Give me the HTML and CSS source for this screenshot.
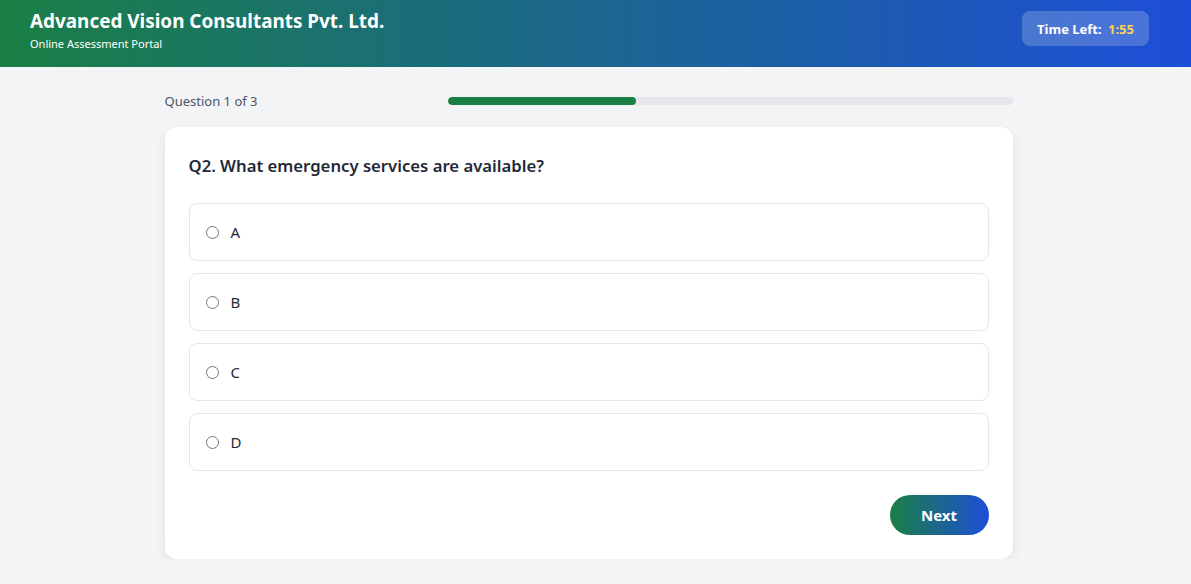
FILE: index.html
```html
<!DOCTYPE html>
<html lang="en">
<head>
<meta charset="utf-8">
<title>Online Assessment Portal</title>
<link rel="stylesheet" href="styles.css">
</head>
<body>
<header class="topbar">
  <div class="brand">
    <h1 class="brand-title">Advanced Vision Consultants Pvt. Ltd.</h1>
    <div class="brand-sub">Online Assessment Portal</div>
  </div>
  <div class="timer">Time Left: <span class="timer-value">1:55</span></div>
</header>
<main class="main">
  <div class="container">
    <div class="progress-row">
      <span class="progress-label">Question 1 of 3</span>
      <div class="progress-track"><div class="progress-fill" style="width:33.33%"></div></div>
    </div>
    <section class="card">
      <h2 class="question">Q2. What emergency services are available?</h2>
      <div class="options">
        <label class="option"><input type="radio" name="q" class="radio"><span>A</span></label>
        <label class="option"><input type="radio" name="q" class="radio"><span>B</span></label>
        <label class="option"><input type="radio" name="q" class="radio"><span>C</span></label>
        <label class="option"><input type="radio" name="q" class="radio"><span>D</span></label>
      </div>
      <div class="actions">
        <button class="next-btn">Next</button>
      </div>
    </section>
  </div>
</main>
</body>
</html>
```

FILE: styles.css
```css
* { box-sizing: border-box; }
html, body { margin: 0; padding: 0; }
body {
  font-family: "Noto Sans", "Open Sans", Arial, sans-serif;
  background: #f3f4f6;
  color: #1f2937;
}
.topbar {
  height: 67px;
  background: linear-gradient(90deg, #1a7f45 0%, #1d4ed8 100%);
  display: flex;
  justify-content: space-between;
  align-items: flex-start;
  padding: 8px 42px 0 30px;
  color: #fff;
}
.brand-title {
  margin: 0;
  font-size: 18.9px;
  line-height: 26px;
  font-weight: 700;
}
.brand-sub {
  font-size: 11px;
  line-height: 18px;
  margin-top: 1px;
}
.timer {
  margin-top: 3px;
  height: 35px;
  padding: 0 15px;
  display: flex;
  align-items: center;
  background: rgba(255,255,255,0.2);
  border-radius: 8px;
  font-size: 13px;
  font-weight: 700;
  white-space: pre;
}
.timer-value { color: #fcd34d; margin-left: 3px; }
.main { padding: 24px 14px 0 0; }
.container { width: 848px; margin: 0 auto; }
.progress-row {
  display: flex;
  align-items: center;
  justify-content: space-between;
  height: 20px;
}
.progress-label { font-size: 13px; color: #4b5563; }
.progress-track {
  width: 565px;
  height: 8px;
  background: #e5e7eb;
  border-radius: 4px;
  overflow: hidden;
}
.progress-fill { height: 100%; background: #1a7f45; border-radius: 4px; }
.card {
  margin-top: 16px;
  background: #fff;
  border-radius: 12px;
  box-shadow: 0 4px 12px rgba(0,0,0,0.08);
  padding: 24px;
}
.question {
  margin: 0 0 22px;
  font-size: 16.7px;
  line-height: 30px;
  font-weight: 600;
  color: #1f2937;
}
.options { display: flex; flex-direction: column; gap: 12px; }
.option {
  height: 58px;
  display: flex;
  align-items: center;
  padding: 0 16px;
  border: 1px solid #e5e7eb;
  border-radius: 8px;
  font-size: 15px;
  color: #1f2937;
}
.radio { width: 13px; height: 13px; margin: 0 12px 0 0; }
.actions { display: flex; justify-content: flex-end; margin-top: 24px; }
.next-btn {
  width: 99px;
  height: 40px;
  border: 0;
  border-radius: 20px;
  background: linear-gradient(90deg, #1a7f45 0%, #1d4ed8 100%);
  color: #fff;
  font-family: inherit;
  font-size: 15px;
  font-weight: 700;
}
```
